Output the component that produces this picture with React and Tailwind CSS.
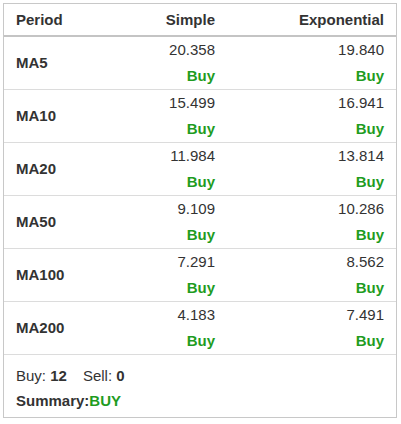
const rows = [
  { period: 'MA5', simple: '20.358', exp: '19.840' },
  { period: 'MA10', simple: '15.499', exp: '16.941' },
  { period: 'MA20', simple: '11.984', exp: '13.814' },
  { period: 'MA50', simple: '9.109', exp: '10.286' },
  { period: 'MA100', simple: '7.291', exp: '8.562' },
  { period: 'MA200', simple: '4.183', exp: '7.491' },
];

export default function App() {
  return (
    <div className="bg-white min-h-screen pt-[3px] pl-[3px] font-['Liberation_Sans',Arial,sans-serif] text-[15px] text-[#333]">
      <div className="w-[394px] border border-[#c8c8c8]">
        {/* Header */}
        <div className="grid grid-cols-[96px_127px_1fr] h-[33px] pt-[1px] items-center border-b-2 border-[#c4c4c4] font-bold">
          <div className="pl-3">Period</div>
          <div className="text-right pr-3">Simple</div>
          <div className="text-right pr-3">Exponential</div>
        </div>

        {/* Rows */}
        {rows.map((r) => (
          <div
            key={r.period}
            className="grid grid-cols-[96px_127px_1fr] items-center border-b border-[#dcdcdc]"
          >
            <div className="pl-3 font-bold">{r.period}</div>
            <div className="text-right pr-3">
              <div className="leading-[26px]">{r.simple}</div>
              <div className="leading-[26px] font-bold text-[#1f9c1f]">Buy</div>
            </div>
            <div className="text-right pr-3">
              <div className="leading-[26px]">{r.exp}</div>
              <div className="leading-[26px] font-bold text-[#1f9c1f]">Buy</div>
            </div>
          </div>
        ))}

        {/* Footer */}
        <div className="pl-3 pt-[9px] pb-[4px]">
          <div className="leading-[24px]">
            Buy: <span className="font-bold">12</span>
            <span className="ml-4">Sell: </span>
            <span className="font-bold">0</span>
          </div>
          <div className="leading-[25px] font-bold">
            Summary:<span className="text-[#1f9c1f]">BUY</span>
          </div>
        </div>
      </div>
    </div>
  );
}
